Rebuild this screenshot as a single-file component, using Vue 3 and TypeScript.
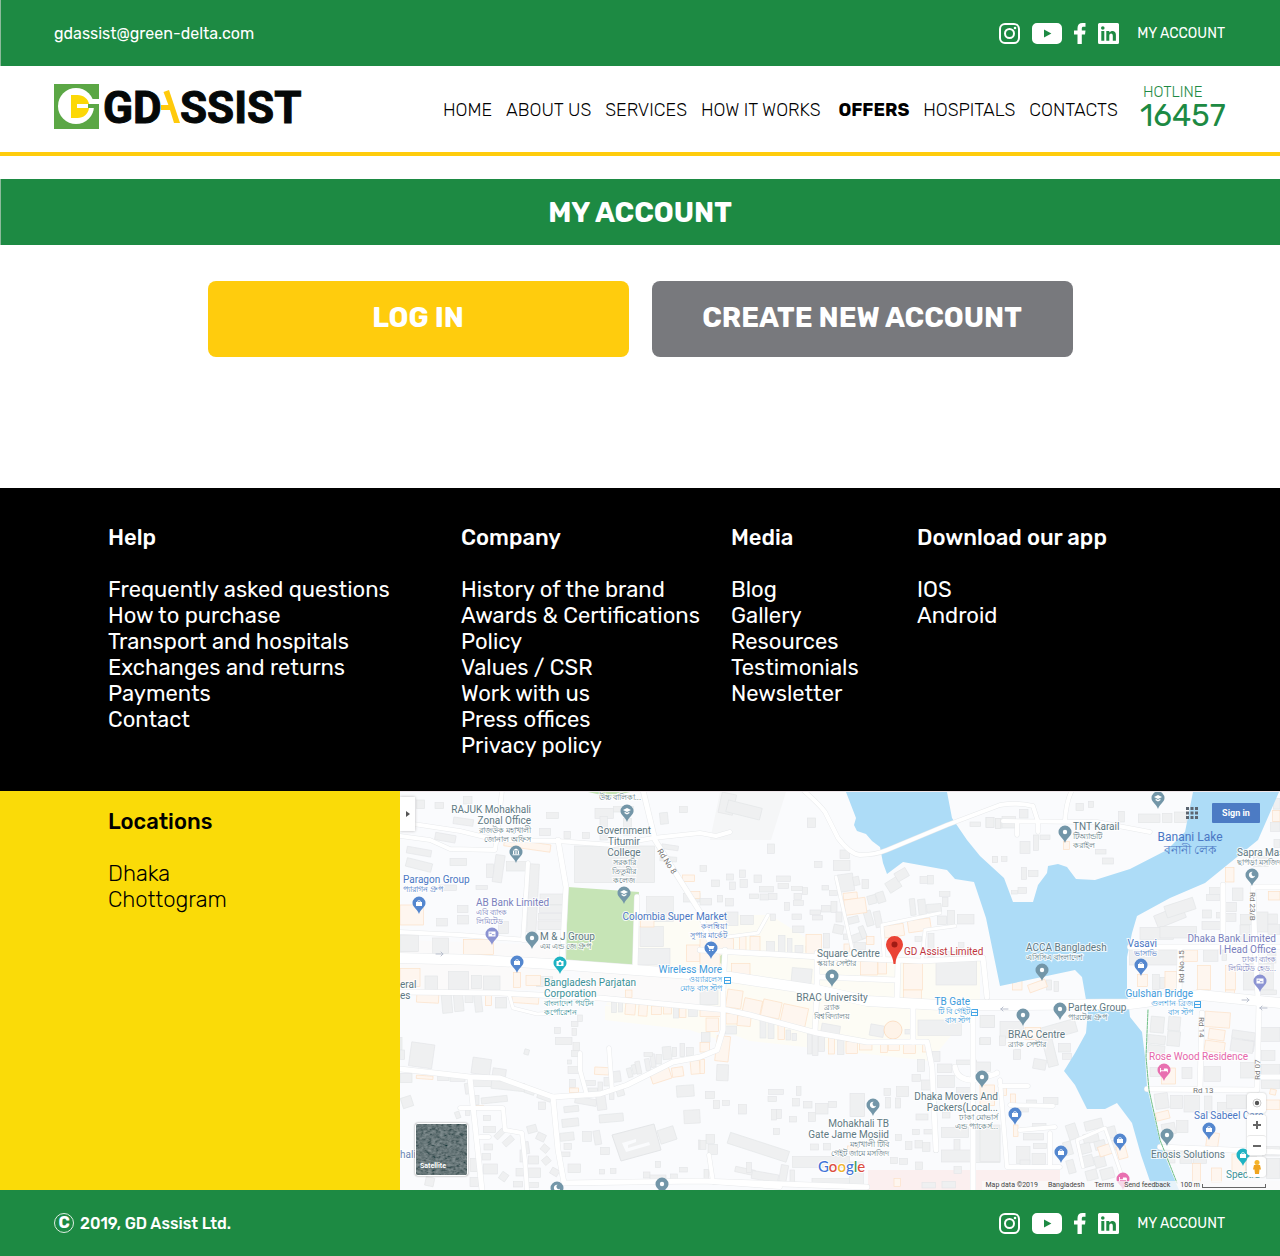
<script setup lang="ts">
interface Social { name: string; width: number; path: string }
interface Label { x: number; y: number; anchor: 'start' | 'middle' | 'end'; tone: string; en: string[]; bn: string[]; big?: boolean }
interface Pin { x: number; y: number; tone: string; icon: string }
interface Tile { x: number; y: number; plain: number[][]; shops: number[][] }

const socials: Social[] = [
  {
    name: 'Instagram',
    width: 21,
    path: 'M6 0h9a6 6 0 0 1 6 6v9a6 6 0 0 1-6 6H6a6 6 0 0 1-6-6V6a6 6 0 0 1 6-6zM6 2a4 4 0 0 0-4 4v9a4 4 0 0 0 4 4h9a4 4 0 0 0 4-4V6a4 4 0 0 0-4-4zM10.5 5a5.5 5.5 0 1 1 0 11a5.5 5.5 0 0 1 0-11zM10.5 7a3.5 3.5 0 1 0 0 7a3.5 3.5 0 0 0 0-7zM16 3.7a1.3 1.3 0 1 1 0 2.6a1.3 1.3 0 0 1 0-2.6z',
  },
  {
    name: 'YouTube',
    width: 30,
    path: 'M5 0h20a5 5 0 0 1 5 5v11a5 5 0 0 1-5 5H5a5 5 0 0 1-5-5V5a5 5 0 0 1 5-5zM12 6.4v8l7.4-4z',
  },
  {
    name: 'Facebook',
    width: 12,
    path: 'M3.5 21v-9.5H0v-4h3.5V5.2C3.5 1.9 5.3 0 8.5 0h3v3.8H9.5C8.3 3.8 7.8 4.3 7.8 5.4v2.1h3.7l-.5 4H7.8V21z',
  },
  {
    name: 'LinkedIn',
    width: 21,
    path: 'M1.5 0h18A1.5 1.5 0 0 1 21 1.5v18a1.5 1.5 0 0 1-1.5 1.5h-18A1.5 1.5 0 0 1 0 19.5v-18A1.5 1.5 0 0 1 1.5 0zM3.300 8v9.800h3V8zM4.800 3.200a1.800 1.800 0 1 0 0 3.600a1.800 1.800 0 0 0 0-3.600zM8.300 8v9.800h3v-5c0-3 3.500-3.200 3.500 0v5h3.100v-6c0-4.700-4.800-4.600-6.600-2.200V8z',
  },
]

const nav = ['HOME', 'ABOUT US', 'SERVICES', 'HOW IT WORKS', 'OFFERS', 'HOSPITALS', 'CONTACTS']
const current = 'OFFERS'

const columns = [
  { title: 'Help', links: ['Frequently asked questions', 'How to purchase', 'Transport and hospitals', 'Exchanges and returns', 'Payments', 'Contact'] },
  { title: 'Company', links: ['History of the brand', 'Awards & Certifications', 'Policy', 'Values / CSR', 'Work with us', 'Press offices', 'Privacy policy'] },
  { title: 'Media', links: ['Blog', 'Gallery', 'Resources', 'Testimonials', 'Newsletter'] },
  { title: 'Download our app', links: ['IOS', 'Android'] },
]

const slate = '#5f7983'
const blue = '#4a77c4'
const sky = '#3d9bdc'
const violet = '#7a80bd'
const teal = '#3c9299'

const labels: Label[] = [
  { x: 131, y: 23, anchor: 'end', tone: slate, en: ['RAJUK Mohakhali', 'Zonal Office'], bn: ['রাজউক মহাখালী', 'জোনাল অফিস'] },
  { x: 241, y: 10, anchor: 'end', tone: slate, en: [], bn: ['উচ্চ বালিকা...'] },
  { x: 224, y: 44, anchor: 'middle', tone: slate, en: ['Government', 'Titumir', 'College'], bn: ['সরকারি', 'তিতুমীর', 'কলেজ'] },
  { x: 3, y: 93, anchor: 'start', tone: blue, en: ['Paragon Group'], bn: ['প্যারাগন গ্রুপ'] },
  { x: 76, y: 116, anchor: 'start', tone: violet, en: ['AB Bank Limited'], bn: ['এবি ব্যাংক', 'লিমিটেড'] },
  { x: 140, y: 150, anchor: 'start', tone: slate, en: ['M & J Group'], bn: ['এম এন্ড জে গ্রুপ'] },
  { x: 144, y: 196, anchor: 'start', tone: teal, en: ['Bangladesh Parjatan', 'Corporation'], bn: ['বাংলাদেশ পর্যটন', 'কর্পোরেশন'] },
  { x: 327, y: 130, anchor: 'end', tone: blue, en: ['Colombia Super Market'], bn: ['কলম্বিয়া', 'সুপার মার্কেট'] },
  { x: 322, y: 183, anchor: 'end', tone: sky, en: ['Wireless More'], bn: ['ওয়্যারলেস', 'মোড় বাস স্টপ'] },
  { x: 0, y: 198, anchor: 'start', tone: slate, en: ['eral', 'es'], bn: [] },
  { x: 417, y: 167, anchor: 'start', tone: slate, en: ['Square Centre'], bn: ['স্কয়ার সেন্টার'] },
  { x: 504, y: 165, anchor: 'start', tone: '#c0353d', en: ['GD Assist Limited'], bn: [] },
  { x: 432, y: 211, anchor: 'middle', tone: slate, en: ['BRAC University'], bn: ['ব্র্যাক', 'বিশ্ববিদ্যালয়'] },
  { x: 570, y: 215, anchor: 'end', tone: sky, en: ['TB Gate'], bn: ['টি বি গেইট', 'বাস স্টপ'] },
  { x: 673, y: 40, anchor: 'start', tone: slate, en: ['TNT Karail'], bn: ['টিঅ্যান্ডটি', 'করাইল'] },
  { x: 790, y: 51, anchor: 'middle', tone: blue, en: ['Banani Lake'], bn: ['বনানী লেক'], big: true },
  { x: 837, y: 66, anchor: 'start', tone: slate, en: ['Sapra Mas'], bn: ['ছাপড়া মসজিদ'] },
  { x: 626, y: 161, anchor: 'start', tone: slate, en: ['ACCA Bangladesh'], bn: ['এসিসিএ বাংলাদেশ'] },
  { x: 757, y: 157, anchor: 'end', tone: blue, en: ['Vasavi'], bn: ['ভাসাভি'] },
  { x: 876, y: 152, anchor: 'end', tone: violet, en: ['Dhaka Bank Limited', '| Head Office'], bn: ['ঢাকা ব্যাংক', 'লিমিটেড হেড...'] },
  { x: 793, y: 207, anchor: 'end', tone: sky, en: ['Gulshan Bridge'], bn: ['গুলশান ব্রিজ', 'বাস স্টপ'] },
  { x: 668, y: 221, anchor: 'start', tone: slate, en: ['Partex Group'], bn: ['পারটেক্স গ্রুপ'] },
  { x: 608, y: 248, anchor: 'start', tone: slate, en: ['BRAC Centre'], bn: ['ব্র্যাক সেন্টার'] },
  { x: 749, y: 270, anchor: 'start', tone: '#e667ab', en: ['Rose Wood Residence'], bn: [] },
  { x: 598, y: 310, anchor: 'end', tone: slate, en: ['Dhaka Movers And', 'Packers(Local...'], bn: ['ঢাকা মোভার্স', 'এন্ড প্যাকের্স...'] },
  { x: 489, y: 337, anchor: 'end', tone: slate, en: ['Mohakhali TB', 'Gate Jame Mosjid'], bn: ['মহাখালী টিবি', 'গেইট জামে মসজিদ'] },
  { x: 794, y: 329, anchor: 'start', tone: blue, en: ['Sal Sabeel Care'], bn: [] },
  { x: 751, y: 368, anchor: 'start', tone: slate, en: ['Enosis Solutions'], bn: [] },
  { x: 826, y: 388, anchor: 'start', tone: teal, en: ['Spectra'], bn: [] },
  { x: 0, y: 368, anchor: 'start', tone: '#6c86b3', en: ['hali'], bn: [] },
]

const roadNames = [
  { x: 257, y: 61, turn: 57, text: 'Rd No 8' },
  { x: 850, y: 102, turn: 90, text: 'Rd 23/B' },
  { x: 784, y: 193, turn: -90, text: 'Rd No 15' },
  { x: 799, y: 227, turn: 90, text: 'Rd 14' },
  { x: 860, y: 290, turn: -90, text: 'Rd 07' },
  { x: 793, y: 303, turn: 0, text: 'Rd 13' },
]

const pinSlate = '#7396a8'
const pinBlue = '#5487cf'
const pinTeal = '#1eb3c3'
const pinPink = '#e870b0'
const pinViolet = '#8b93d2'

const pins: Pin[] = [
  { x: 116, y: 62, tone: pinSlate, icon: 'museum' },
  { x: 227, y: 21, tone: pinSlate, icon: 'school' },
  { x: 224, y: 103, tone: pinSlate, icon: 'school' },
  { x: 19, y: 113, tone: pinBlue, icon: 'bag' },
  { x: 92, y: 144, tone: pinViolet, icon: 'card' },
  { x: 132, y: 148, tone: pinSlate, icon: 'dot' },
  { x: 117, y: 172, tone: pinBlue, icon: 'bag' },
  { x: 160, y: 173, tone: pinTeal, icon: 'camera' },
  { x: 311, y: 158, tone: pinBlue, icon: 'cart' },
  { x: 432, y: 186, tone: pinSlate, icon: 'dot' },
  { x: 665, y: 42, tone: pinSlate, icon: 'dot' },
  { x: 758, y: 8, tone: pinSlate, icon: 'school' },
  { x: 852, y: 85, tone: pinSlate, icon: 'moon' },
  { x: 642, y: 180, tone: pinSlate, icon: 'dot' },
  { x: 741, y: 175, tone: pinBlue, icon: 'bag' },
  { x: 860, y: 191, tone: pinViolet, icon: 'card' },
  { x: 157, y: 398, tone: pinSlate, icon: 'moon' },
  { x: 262, y: 394, tone: pinSlate, icon: 'dot' },
  { x: 473, y: 315, tone: pinSlate, icon: 'moon' },
  { x: 582, y: 287, tone: pinSlate, icon: 'dot' },
  { x: 623, y: 225, tone: pinSlate, icon: 'dot' },
  { x: 660, y: 219, tone: pinSlate, icon: 'dot' },
  { x: 764, y: 280, tone: pinPink, icon: 'bed' },
  { x: 615, y: 324, tone: pinBlue, icon: 'bag' },
  { x: 661, y: 362, tone: pinBlue, icon: 'bag' },
  { x: 720, y: 350, tone: pinBlue, icon: 'bag' },
  { x: 809, y: 339, tone: pinBlue, icon: 'bag' },
  { x: 767, y: 345, tone: pinSlate, icon: 'dot' },
  { x: 843, y: 365, tone: pinTeal, icon: 'bag' },
  { x: 723, y: 389, tone: pinPink, icon: 'bed' },
]

const glyphs: Record<string, string> = {
  museum: 'M-3.500-1.500L0-3.500L3.500-1.500zM-3-1h1.200v3h-1.200zM-.6-1h1.200v3h-1.200zM1.800-1h1.200v3h-1.200zM-3.500 2.200h7v1h-7z',
  school: 'M-4-1L0-3L4-1L0 1zM-2.400.8L0 2L2.400.8v1.400L0 3.400L-2.400 2.200z',
  bag: 'M-3-1h1.200a1.800 1.800 0 0 1 3.600 0H3v4h-6zM-1-1h2a1 1 0 0 0-2 0z',
  card: 'M-3.500-2.500h7v5h-7zM-2.500-1.200v1h2v-1zM0 .3v1h2.500v-1z',
  camera: 'M-3.500-2h2l.8-1h1.400l.8 1h2v5h-7zM0-1a1.500 1.500 0 1 0 0 3a1.500 1.500 0 0 0 0-3z',
  cart: 'M-4-3h1.600l.4 1h5.500l-1.200 3h-4zM-2 1.700h1.400v1.400h-1.400zM1 1.700h1.400v1.400h-1.400z',
  bed: 'M-4-2h.9v2.200h3v-1.700h2.600a1.300 1.300 0 0 1 1.400 1.300v2.500h-.8v-1h-6.200v1h-.9z',
  moon: 'M1.500 2.800a3.200 3.200 0 1 1-.8-6a2.300 2.300 0 1 0 2.300 4a3 3 0 0 1-1.500 2z',
  dot: 'M-2.200 0a2.200 2.200 0 1 0 4.400 0a2.200 2.200 0 1 0-4.400 0z',
}

const roads: { w: number; d: string }[] = [
  { w: 4, d: 'M0 32L60 41L97 50L157 51L213 55L253 48L300 43L316 46L330 42' },
  { w: 4, d: 'M0 46L30 50L50 59L95 60L99 30L102 0' },
  { w: 5, d: 'M158 50L166 97L162 173' },
  { w: 4, d: 'M128 73L123 150' },
  { w: 4, d: 'M0 142L60 145L127 150' },
  { w: 5, d: 'M243 0L255 50L300 122L309 150' },
  { w: 5, d: 'M237 107L235 178' },
  { w: 4, d: 'M403 0Q420 15 425 22L438 48Q450 64 460 65Q475 65 487 60L547 35L600 15Q618 12 633 16L638 32L638 42' },
  { w: 4, d: 'M603 31L697 32L750 42M617 32V45M665 31Q666 12 672 0' },
  { w: 3, d: 'M436 87L452 158M484 167L482 135L540 123M522 170L525 140L555 136M368 125L358 143L327 147' },
  { w: 5, d: 'M300 160L420 167L520 171L583 168L587 207M325 160L323 200' },
  { w: 5, d: 'M417 163V200L415 242M498 170L497 213M420 187L497 190' },
  { w: 5, d: 'M0 202L100 203L200 208L327 220L350 225L417 243L467 252H527L532 277L536 360' },
  { w: 3, d: 'M109 204L113 218L137 224L175 222' },
  { w: 5, d: 'M323 200V240L317 260L300 267L273 272L227 295L200 304L153 307L100 288L70 287L0 279' },
  { w: 5, d: 'M70 288L82 400M153 307L158 360L164 393L300 391L467 397' },
  { w: 4, d: 'M60 318H103L105 340L122 343L125 370L127 400M80 347H89' },
  { w: 4, d: 'M180 263V280L186 302M209 258L212 300' },
  { w: 4, d: 'M309 365L313 392L380 397' },
  { w: 5, d: 'M513 215V252M573 213V400M555 277Q557 290 573 290Q595 285 597 283' },
  { w: 4, d: 'M600 290L607 377H660M600 296H628M610 315L653 316M650 343V377M620 340L655 337' },
  { w: 3, d: 'M683 377L677 350L705 338L727 400' },
  { w: 5, d: 'M747 299L857 300L859 213M802 223L800 299M760 357L880 362M857 287H880' },
  { w: 5, d: 'M730 157H880M823 95V157M853 97L855 157L858 208M853 97H880M780 157L779 210' },
  { w: 10, d: 'M0 168L80 170L167 175L235 180L330 187L417 200L467 211L540 215H620L730 214L800 205L880 213' },
]

const tiles: Tile[] = [
  {
    x: 0, y: 0,
    plain: [[50, 30, 24, 26], [105, 38, 26, 18], [190, 20, 26, 22], [160, 85, 60, 20, 8], [105, 132, 62, 22, 10], [20, 175, 74, 20, 10], [18, 212, 78, 26, 14], [150, 205, 50, 22], [117, 285, 52, 16], [228, 286, 34, 12], [260, 222, 20, 40], [282, 195, 28, 82, 8], [320, 215, 60, 28], [385, 222, 28, 205, 3], [440, 68, 35, 18], [418, 115, 34, 22], [492, 124, 20, 22], [548, 128, 20, 18], [585, 55, 55, 30], [640, 50, 60, 16], [600, 80, 22, 70], [670, 85, 24, 50], [780, 68, 24, 34, -6], [838, 50, 24, 18], [785, 165, 50, 14, 8], [780, 200, 50, 14, 5], [172, 346, 32, 22], [172, 376, 34, 26], [110, 386, 32, 22], [0, 435, 55, 50], [98, 444, 48, 46], [295, 395, 30, 36], [420, 312, 70, 32], [418, 345, 70, 22], [416, 370, 70, 20], [414, 393, 70, 26], [740, 320, 80, 75], [720, 410, 70, 60], [700, 475, 110, 50], [145, 545, 60, 55], [214, 556, 30, 40], [250, 558, 50, 42], [75, 558, 38, 42], [410, 560, 48, 30], [524, 168, 240, 110], [850, 310, 50, 26]],
    shops: [[312, 155, 140, 22, 8], [0, 345, 70, 60], [190, 448, 90, 45], [848, 255, 36, 20], [870, 305, 30, 20], [340, 548, 22, 44], [378, 556, 44, 30], [0, 535, 60, 55], [722, 375, 40, 36], [860, 465, 40, 50]],
  },
  {
    x: 300, y: 0,
    plain: [[60, 10, 44, 62, 12], [80, 42, 104, 36, 14], [322, 84, 25, 28], [202, 162, 22, 28], [0, 227, 20, 18], [344, 214, 22, 18], [420, 180, 28, 26], [400, 212, 50, 30], [415, 252, 46, 52, -8], [460, 260, 18, 26, -12], [486, 268, 20, 28], [560, 268, 40, 34, -32], [586, 240, 38, 28, -30], [660, 260, 22, 20], [682, 256, 18, 26], [718, 305, 32, 14], [728, 322, 16, 28], [230, 258, 42, 16], [234, 281, 32, 14], [275, 290, 32, 12], [307, 293, 16, 20], [178, 290, 42, 16], [148, 312, 28, 14], [180, 312, 25, 18], [205, 310, 26, 18], [118, 240, 18, 22], [80, 252, 20, 18], [88, 276, 18, 22], [120, 268, 22, 24], [162, 255, 22, 22], [35, 270, 24, 20], [0, 325, 35, 20], [52, 316, 16, 20], [76, 326, 24, 22], [254, 337, 14, 24], [282, 310, 22, 18], [280, 332, 30, 14], [276, 372, 28, 16], [278, 408, 34, 20], [366, 286, 20, 14], [388, 302, 24, 14], [393, 335, 18, 32], [364, 346, 28, 20], [330, 360, 32, 14], [338, 376, 30, 14], [408, 366, 18, 30], [400, 405, 30, 26, 12], [430, 432, 22, 16], [503, 316, 26, 26, -15], [530, 306, 24, 32, -18], [495, 362, 22, 46, -16], [524, 364, 20, 48, -12], [444, 380, 32, 20, -14], [450, 430, 50, 22, -20], [480, 408, 16, 38, -20], [462, 458, 34, 22], [630, 326, 16, 50, -6], [655, 328, 22, 46, -6], [680, 342, 44, 24, -4], [712, 378, 28, 26], [742, 362, 22, 46], [772, 374, 50, 28], [684, 430, 18, 76], [645, 440, 20, 14], [708, 510, 122, 75], [776, 458, 16, 14], [735, 484, 80, 18], [80, 366, 34, 40], [122, 376, 38, 28], [212, 372, 14, 20], [235, 436, 20, 55], [262, 446, 14, 44], [200, 455, 24, 32], [285, 466, 24, 22], [318, 468, 40, 18], [370, 430, 18, 44], [275, 535, 60, 44, 5], [810, 96, 32, 14], [858, 82, 24, 30], [886, 85, 18, 30], [878, 200, 14, 18]],
    shops: [[430, 308, 42, 20, -6], [434, 326, 64, 46, -8], [500, 440, 22, 24], [432, 462, 16, 24], [552, 404, 60, 36, -8], [624, 388, 68, 36, -8], [318, 433, 46, 62], [118, 440, 20, 42], [150, 440, 30, 46], [0, 445, 100, 40], [94, 520, 56, 36], [0, 485, 60, 60], [534, 514, 26, 38], [482, 515, 50, 40], [610, 520, 58, 80]],
  },
  {
    x: 580, y: 0,
    plain: [[288, 40, 22, 22], [325, 34, 16, 18], [415, 64, 18, 32], [475, 72, 65, 26], [548, 70, 28, 28], [584, 66, 36, 32], [18, 82, 24, 30], [46, 86, 16, 30], [66, 80, 40, 34], [118, 58, 26, 26], [120, 154, 30, 36], [160, 135, 16, 46], [180, 135, 30, 14], [346, 178, 32, 14], [368, 204, 32, 18], [38, 200, 14, 18], [65, 200, 16, 14], [124, 232, 16, 36], [146, 242, 28, 18], [94, 302, 18, 10], [114, 292, 26, 18], [880, 25, 20, 32], [872, 98, 28, 26], [882, 148, 18, 24], [688, 293, 38, 20], [680, 313, 40, 18], [757, 294, 32, 38], [734, 337, 36, 28], [734, 370, 34, 24], [668, 360, 26, 24], [666, 394, 56, 24], [710, 368, 12, 16], [782, 374, 32, 30], [780, 405, 30, 50], [830, 366, 34, 60], [864, 372, 28, 30], [864, 404, 36, 30], [525, 360, 90, 40, -22], [555, 335, 90, 36, -18], [480, 412, 100, 36], [540, 410, 110, 34], [448, 480, 150, 45], [670, 480, 44, 34], [726, 482, 14, 30], [518, 553, 20, 46], [540, 562, 16, 34], [790, 520, 90, 80], [862, 485, 26, 34], [222, 575, 14, 30], [200, 570, 15, 30], [880, 60, 20, 34], [820, 198, 46, 32]],
    shops: [[250, 155, 18, 24], [736, 232, 26, 44], [865, 304, 35, 26], [472, 554, 30, 36], [555, 545, 34, 55], [610, 480, 42, 34], [652, 526, 40, 74], [736, 526, 30, 74], [878, 62, 22, 32], [98, 572, 28, 28], [145, 576, 55, 24, -20]],
  },
  {
    x: 0, y: 200,
    plain: [[126, 14, 30, 55, -5], [162, 10, 28, 54, -5], [195, 12, 24, 26], [224, 16, 22, 50, -6], [286, 22, 34, 32], [0, 142, 6, 38], [0, 180, 14, 28], [30, 160, 70, 72, 8], [216, 205, 56, 48, 8], [278, 236, 40, 22, 8], [0, 250, 36, 28], [113, 258, 34, 14], [150, 262, 45, 12], [216, 268, 58, 22], [274, 276, 100, 24, 6], [374, 296, 30, 16, 18], [412, 312, 42, 18, 20], [415, 336, 22, 22], [5, 320, 32, 32, -18], [195, 280, 14, 32, -8], [225, 316, 12, 28], [244, 320, 78, 18, -6], [250, 376, 22, 16], [166, 365, 14, 20, -20], [196, 360, 14, 16], [250, 410, 36, 18], [282, 424, 34, 16, -45], [308, 444, 34, 18, -42], [252, 462, 26, 18], [246, 490, 26, 20], [250, 522, 42, 30], [300, 548, 22, 24, 35], [212, 505, 22, 40], [210, 562, 26, 28], [382, 406, 28, 22, -15], [410, 430, 26, 22, 25], [375, 455, 12, 36, -8], [360, 480, 12, 36], [386, 498, 30, 24], [424, 466, 22, 20, 40], [428, 502, 22, 20, -40], [348, 536, 26, 22], [384, 534, 38, 28], [340, 575, 28, 16], [384, 578, 32, 14], [452, 536, 24, 20, 30], [76, 562, 26, 26, 12], [463, 112, 18, 18], [466, 142, 50, 22], [516, 116, 14, 20], [519, 158, 20, 24], [515, 182, 24, 18], [533, 75, 14, 20], [514, 94, 20, 16], [502, 210, 12, 12], [504, 230, 38, 20], [508, 268, 18, 24], [373, 178, 14, 16, 15], [525, 324, 65, 20, 10], [590, 316, 28, 44, -8], [492, 348, 44, 18, -6], [486, 386, 50, 24, -6], [480, 428, 42, 24, -6], [492, 460, 22, 18], [480, 486, 30, 14], [504, 522, 38, 26], [548, 424, 26, 30], [582, 422, 20, 42, -10], [598, 372, 72, 24, -5], [602, 472, 26, 22], [598, 538, 16, 14], [632, 536, 16, 14], [552, 272, 34, 14], [565, 294, 28, 12], [594, 276, 14, 28], [612, 262, 16, 26], [636, 244, 26, 32, -8], [628, 308, 14, 20], [650, 294, 22, 24, -15], [682, 234, 14, 28, -15], [697, 224, 12, 28, -15], [708, 214, 14, 38, -12], [736, 206, 14, 36, -10], [752, 192, 14, 40, -8], [732, 188, 26, 12], [768, 194, 16, 28], [788, 170, 26, 38, -5], [818, 172, 12, 28], [840, 160, 14, 40], [860, 172, 20, 26], [830, 286, 52, 34, -4], [852, 360, 48, 40, -3], [776, 414, 50, 42, -18], [766, 514, 16, 18], [838, 532, 24, 14], [730, 546, 20, 18], [750, 555, 48, 16], [812, 552, 20, 20], [635, 38, 14, 30], [656, 38, 12, 28], [820, 46, 16, 38], [866, 54, 26, 26], [895, 450, 5, 28]],
    shops: [[50, 8, 66, 30, 3], [256, 14, 18, 32], [336, 20, 80, 20, 4], [49, 257, 50, 10, 4], [230, 346, 20, 12], [508, 294, 28, 14], [584, 232, 42, 22, 3], [752, 238, 60, 36, -18], [816, 232, 34, 28, -8], [872, 212, 28, 40, -5], [676, 40, 30, 34, 5], [716, 42, 26, 36, 4], [754, 48, 30, 26], [790, 50, 24, 22], [838, 52, 20, 30], [676, 0, 20, 22]],
  },
  {
    x: 300, y: 200,
    plain: [[50, 224, 35, 48, 2], [16, 304, 28, 22], [40, 332, 18, 24], [68, 332, 20, 14], [115, 344, 24, 28], [206, 298, 44, 15], [204, 319, 25, 16], [289, 290, 14, 26], [278, 326, 20, 22], [310, 334, 26, 20], [346, 340, 38, 32], [386, 334, 24, 18], [215, 358, 14, 32], [230, 358, 14, 28], [268, 380, 22, 16], [325, 368, 22, 26], [220, 416, 18, 18], [450, 310, 44, 70], [552, 296, 20, 20], [556, 322, 16, 32], [590, 290, 36, 30], [586, 324, 16, 30], [332, 462, 24, 18], [370, 460, 22, 20], [586, 434, 18, 18], [616, 455, 20, 24], [645, 452, 22, 22], [638, 418, 20, 16], [672, 418, 34, 14], [648, 372, 36, 18], [572, 503, 20, 18], [598, 505, 25, 18], [646, 516, 22, 22], [668, 458, 22, 26], [82, 455, 186, 34, 18], [278, 500, 170, 32], [105, 535, 60, 16, 12], [140, 518, 14, 30], [155, 548, 80, 24, 10], [240, 525, 22, 50, 10], [336, 566, 112, 16], [18, 434, 26, 26], [24, 463, 28, 30], [0, 452, 18, 26], [12, 538, 14, 30], [270, 540, 14, 44], [448, 516, 42, 68], [636, 254, 26, 20], [665, 270, 30, 30], [652, 208, 22, 36], [712, 222, 44, 26], [713, 256, 50, 36], [696, 184, 24, 30], [770, 210, 60, 14], [770, 292, 50, 26], [838, 145, 34, 18], [848, 76, 36, 36], [828, 216, 44, 28], [654, 90, 130, 46], [180, 88, 18, 56], [204, 90, 18, 56], [258, 120, 14, 30], [276, 130, 14, 22], [322, 132, 14, 60], [338, 134, 16, 62], [356, 140, 18, 44], [412, 150, 20, 44], [76, 108, 34, 24], [364, 104, 56, 26, 10], [510, 105, 42, 34, 10], [615, 118, 20, 14], [4, 128, 26, 28], [0, 0, 54, 44], [762, 448, 18, 40], [724, 412, 82, 30], [724, 480, 98, 36], [728, 366, 22, 18], [826, 416, 74, 102], [762, 530, 22, 20], [666, 578, 40, 16], [726, 574, 40, 20]],
    shops: [[80, 0, 46, 54, 8], [130, 28, 54, 44, 12], [186, 32, 56, 50, 12], [245, 48, 76, 56, 12], [0, 55, 64, 24], [18, 84, 38, 40], [78, 70, 34, 32], [112, 78, 40, 30, 5], [234, 104, 20, 44], [385, 140, 18, 52], [438, 154, 34, 36], [478, 158, 38, 22], [542, 160, 20, 28], [566, 162, 32, 20], [610, 164, 36, 26], [668, 164, 14, 22], [48, 138, 40, 76, 6], [0, 158, 28, 28], [0, 208, 14, 42], [610, 0, 54, 34], [842, 286, 42, 60], [582, 566, 20, 24], [442, 468, 30, 14]],
  },
  {
    x: 580, y: 200,
    plain: [[0, 76, 44, 36], [60, 94, 70, 50], [0, 142, 32, 22], [58, 138, 18, 28], [180, 100, 110, 40, -16], [195, 140, 30, 90, -14], [235, 160, 36, 26], [248, 190, 26, 18], [100, 178, 22, 30], [160, 208, 38, 30, 10], [512, 80, 40, 48, 5], [504, 136, 52, 26, 6], [504, 166, 50, 24, 6], [565, 80, 36, 42, 5], [562, 124, 38, 44, 5], [510, 232, 34, 28], [606, 232, 30, 34], [672, 230, 50, 44], [785, 152, 38, 30, 8], [782, 218, 42, 46], [756, 124, 70, 24, 8], [752, 150, 68, 36, 8], [840, 112, 60, 42], [845, 182, 40, 30], [845, 224, 55, 30], [845, 270, 55, 26], [525, 310, 40, 46, -8], [572, 316, 36, 40], [612, 316, 46, 50], [674, 318, 22, 50], [712, 338, 44, 28], [740, 315, 60, 40], [546, 400, 40, 34, -10], [590, 392, 34, 36], [262, 402, 30, 46, -18], [314, 390, 54, 28, -14], [310, 430, 46, 28, -12], [380, 410, 28, 34, -15], [390, 450, 30, 30, -15], [302, 460, 30, 30, -15], [344, 452, 32, 26, -15], [308, 496, 32, 34, -15], [344, 498, 32, 34, -15], [362, 535, 40, 32, -15], [318, 540, 34, 30, -15], [252, 455, 24, 40, -15], [262, 510, 22, 40, -15], [190, 322, 44, 22], [140, 330, 30, 16], [115, 350, 30, 16], [158, 400, 40, 16], [130, 430, 60, 20], [160, 460, 40, 16], [110, 470, 40, 50], [156, 490, 40, 34], [0, 405, 60, 110], [555, 475, 30, 44], [600, 484, 36, 36], [640, 490, 40, 30], [780, 500, 50, 40], [848, 470, 50, 28], [860, 505, 40, 60], [570, 6, 30, 14], [840, 0, 50, 14], [120, 510, 30, 20]],
    shops: [[674, 66, 76, 46, 4], [686, 118, 48, 32, 8], [674, 154, 60, 32, 8], [545, 234, 42, 48], [135, 112, 46, 36], [528, 365, 40, 24, -14], [92, 312, 14, 28], [100, 405, 14, 34], [62, 290, 18, 26], [0, 285, 44, 62], [356, 466, 38, 30, -18], [412, 468, 28, 38, -15], [638, 520, 24, 60], [695, 534, 30, 44], [756, 492, 40, 60], [870, 298, 18, 16, 12], [855, 330, 45, 28], [680, 428, 36, 42, 8], [650, 0, 36, 14], [736, 0, 28, 20]],
  },
]

function spin(b: number[]): string | undefined {
  return b.length > 4 ? `rotate(${b[4]} ${b[0] + b[2] / 2} ${b[1] + b[3] / 2})` : undefined
}
function lineY(l: Label, i: number): number {
  return l.y + i * 11
}
function subY(l: Label, i: number): number {
  return l.big ? l.y + 13 : l.y + l.en.length * 11 + i * 9 - (l.en.length ? 2 : 0)
}
</script>

<template>
  <div class="page">
    <div class="bar top">
      <a class="mail" href="mailto:gdassist@green-delta.com">gdassist@green-delta.com</a>
      <nav class="social" aria-label="Social and account">
        <a v-for="s in socials" :key="s.name" href="#" :aria-label="s.name">
          <svg :width="s.width" height="21" :viewBox="`0 0 ${s.width} 21`"><path :d="s.path" fill="#fff" fill-rule="evenodd" /></svg>
        </a>
        <a class="account" href="#">MY ACCOUNT</a>
      </nav>
    </div>

    <header class="header">
      <a class="logo" href="#" aria-label="GD Assist">
        <svg width="248" height="46" viewBox="0 0 248 46">
          <rect width="45" height="45" fill="#5ba745" />
          <circle cx="22" cy="22" r="18" fill="#fff" />
          <path d="M34 15h12v5H34z" fill="#fff" />
          <path d="M34 20h11v4H34z" fill="#5ba745" />
          <path d="M17 11h6.500c6 0 11 4 11.500 9H23v4h12c-.6 6-5.500 10-11.500 10H17z" fill="#fcd806" />
          <text x="49" y="39" class="mark">GD</text>
          <path d="M109.500 8L115 6L126 39h-6L116 26h-9v-5h7.400z" fill="#ffca0b" />
          <text x="126" y="39" class="mark">SSIST</text>
        </svg>
      </a>
      <nav class="menu" aria-label="Main">
        <a v-for="n in nav" :key="n" href="#" :class="{ current: n === current }">{{ n }}</a>
      </nav>
      <div class="hotline"><span>HOTLINE</span><strong>16457</strong></div>
    </header>

    <main>
      <h1 class="banner">MY ACCOUNT</h1>
      <div class="actions">
        <button type="button" class="login">LOG IN</button>
        <button type="button" class="create">CREATE NEW ACCOUNT</button>
      </div>
    </main>

    <section class="links">
      <div v-for="c in columns" :key="c.title">
        <h2>{{ c.title }}</h2>
        <ul>
          <li v-for="l in c.links" :key="l"><a href="#">{{ l }}</a></li>
        </ul>
      </div>
    </section>

    <section class="places">
      <div class="locations">
        <h2>Locations</h2>
        <ul>
          <li><a href="#">Dhaka</a></li>
          <li><a href="#">Chottogram</a></li>
        </ul>
      </div>
      <div class="map">
        <svg class="canvas" viewBox="0 2 880 398" preserveAspectRatio="xMidYMid slice" role="img" aria-label="Map of Mohakhali, Dhaka">
          <rect y="2" width="880" height="398" fill="#fafbfd" />
          <path d="M20 2h66l-15 48H10z" transform="translate(300)" fill="#f5f6f7" />
          <path d="M240 125h130l60 38 150 8v40l-50 60-180-20-80-30-64-6zM205 216l95 4 20 30-30-10-85-10z" fill="#fdfcf5" />
          <path d="M0 150L160 155V200L0 200zM180 180l120 10v30l-120-10z" fill="#fbfafa" />
          <path d="M468 380h192v20H468z" fill="#fbefef" />
          <path d="M188 2h42l-20 5zM320 166l4-3v13l-4-3z" fill="#c6e4b6" />
          <g v-for="(t, ti) in tiles" :key="ti" :transform="`translate(${t.x} ${t.y}) scale(.3333)`">
            <rect v-for="(b, i) in t.plain" :key="'p' + i" :x="b[0]" :y="b[1]" :width="b[2]" :height="b[3]" :transform="spin(b)" fill="#eff0f1" stroke="#e4e6e8" stroke-width="2" />
            <rect v-for="(b, i) in t.shops" :key="'s' + i" :x="b[0]" :y="b[1]" :width="b[2]" :height="b[3]" :transform="spin(b)" fill="#fef6ef" stroke="#fce0c6" stroke-width="2" />
          </g>
          <path d="M212 345l42-11 7 26-40 11z" fill="#eff0f1" stroke="#e4e6e8" />
          <path d="M222 353l14-4v3l-8 3v3l21-6 1 3-24 7z" fill="#fafbfd" />
          <circle cx="493" cy="240" r="9" fill="#fef3e8" stroke="#fce0c6" />
          <path d="M168 97l71 5-5 73-68-4z" fill="#c6e4b6" />
          <path
            d="M446 2L456 28L454 35L457 41L466 44L472 51L480 57L483 73L487 84L503 72L547 80L555 89L574 92L586 128L600 196L675 180L682 187L688 221L686 243L675 263L664 281L675 295L687 319H705L717 313L732 333L741 365L753 400H779L761 357L747 297L745 267L742 242L730 227L727 200V167L732 143L737 126L770 108L805 93L858 50L879 2H793L785 42L767 60L730 79L695 90L676 89L667 77L658 74L648 76L647 83L638 95L633 112H613L604 88L580 66L567 50L552 28L547 2z"
            fill="#addcf7"
          />
          <g fill="none" stroke-linecap="round" stroke-linejoin="round">
            <path v-for="(r, i) in roads" :key="'c' + i" :d="r.d" stroke="#e8eaec" :stroke-width="r.w + 1" />
            <path v-for="(r, i) in roads" :key="'r' + i" :d="r.d" stroke="#fff" :stroke-width="r.w" />
            <path d="M748 220L746 267L749 300L760 350L777 393" stroke="#6fbf86" stroke-dasharray="3 1" />
            <path d="M36 164h7m-2-2l2 2-2 2M601 219h7m-7 0l2-2m-2 2l2 2M842 210h7m-2-2l2 2-2 2M860 218h7m-7 0l2-2m-2 2l2 2" stroke="#b9bfcd" />
          </g>
          <g class="road-names">
            <text v-for="r in roadNames" :key="r.text" :transform="`translate(${r.x} ${r.y}) rotate(${r.turn})`">{{ r.text }}</text>
          </g>
          <path fill="#41a5e6" fill-rule="evenodd" d="M324 187h7v7h-7zm1 1v2h5v-2zm0 3v2h5v-2zM571 219h7v7h-7zm1 1v2h5v-2zm0 3v2h5v-2zM794 211h7v7h-7zm1 1v2h5v-2zm0 3v2h5v-2z" />
          <g v-for="(p, i) in pins" :key="'pin' + i" :transform="`translate(${p.x} ${p.y})`">
            <path d="M0-6.500a6.500 6.500 0 0 1 6.500 6.500C6.500 4 2 5.500 0 11C-2 5.500-6.500 4-6.500 0A6.500 6.500 0 0 1 0-6.500z" :fill="p.tone" />
            <path :d="glyphs[p.icon]" fill="#fff" fill-rule="evenodd" />
          </g>
          <g v-for="(l, i) in labels" :key="'l' + i" :class="['label', { big: l.big }]" :fill="l.tone" :text-anchor="l.anchor">
            <text v-for="(t, k) in l.en" :key="t" :x="l.x" :y="lineY(l, k)">{{ t }}</text>
            <text v-for="(t, k) in l.bn" :key="t" :x="l.x" :y="subY(l, k)" class="bn">{{ t }}</text>
          </g>
          <path d="M494.500 146a8.500 8.500 0 0 1 8.500 8.500C503 161 496 163 495.500 174h-2C493 163 486 161 486 154.500A8.500 8.500 0 0 1 494.500 146z" fill="#ea4335" />
          <circle cx="494.500" cy="154.500" r="3" fill="#a11b14" />
          <text x="418" y="382" class="google">
            <tspan fill="#4274d8">G</tspan><tspan fill="#dc4e41">o</tspan><tspan fill="#f0b42c">o</tspan><tspan fill="#4274d8">g</tspan><tspan fill="#3c9a56">l</tspan><tspan fill="#dc4e41">e</tspan>
          </text>
        </svg>

        <button type="button" class="drawer" aria-label="Expand side panel"><svg width="4" height="6" viewBox="0 0 4 6"><path d="M0 0l4 3-4 3z" fill="#555" /></svg></button>
        <button type="button" class="satellite">
          <svg width="51" height="51" viewBox="0 0 51 51" aria-hidden="true">
            <filter id="terrain"><feTurbulence type="fractalNoise" baseFrequency=".25 .4" numOctaves="3" seed="4" /><feColorMatrix values=".6 .4 0 0 -.25  .6 .4 0 0 -.2  .6 .4 0 0 -.2  0 0 0 0 1" /></filter>
            <rect width="51" height="51" fill="#33474b" />
            <rect width="51" height="51" filter="url(#terrain)" opacity=".6" />
          </svg>
          <span>Satellite</span>
        </button>
        <div class="user">
          <button type="button" class="apps" aria-label="Apps">
            <svg width="12" height="12" viewBox="0 0 12 12"><path d="M0 0h3v3H0zM4.500 0h3v3h-3zM9 0h3v3H9zM0 4.500h3v3H0zM4.500 4.500h3v3h-3zM9 4.500h3v3H9zM0 9h3v3H0zM4.500 9h3v3h-3zM9 9h3v3H9z" fill="#5c6570" /></svg>
          </button>
          <button type="button" class="signin">Sign in</button>
        </div>
        <div class="controls">
          <button type="button" aria-label="Your location"><svg width="10" height="10" viewBox="0 0 10 10"><circle cx="5" cy="5" r="4" fill="none" stroke="#ccc" /><circle cx="5" cy="5" r="2.200" fill="#555" /></svg></button>
          <div class="zoom">
            <button type="button" aria-label="Zoom in"><svg width="8" height="8" viewBox="0 0 8 8"><path d="M3 0h2v3h3v2H5v3H3V5H0V3h3z" fill="#666" /></svg></button>
            <button type="button" aria-label="Zoom out"><svg width="8" height="8" viewBox="0 0 8 8"><path d="M0 3h8v2H0z" fill="#666" /></svg></button>
          </div>
          <button type="button" aria-label="Street View"><svg width="10" height="14" viewBox="0 0 10 14"><circle cx="5" cy="2.500" r="2.500" fill="#f5b52b" /><path d="M2 5h6l1 4.500H7.500L7 14H3l-.5-4.500H1z" fill="#f0a51e" /></svg></button>
        </div>
        <div class="credits">
          <span>Map data ©2019</span><span>Bangladesh</span><a href="#">Terms</a><a href="#">Send feedback</a><span class="scale">100 m<i></i></span>
        </div>
      </div>
    </section>

    <footer class="bar bottom">
      <p class="copy"><span class="c">C</span>2019, GD Assist Ltd.</p>
      <nav class="social" aria-label="Footer social and account">
        <a v-for="s in socials" :key="s.name" href="#" :aria-label="s.name">
          <svg :width="s.width" height="21" :viewBox="`0 0 ${s.width} 21`"><path :d="s.path" fill="#fff" fill-rule="evenodd" /></svg>
        </a>
        <a class="account" href="#">MY ACCOUNT</a>
      </nav>
    </footer>
  </div>
</template>

<style>
body {
  margin: 0;
  background: #fff;
}
</style>

<style scoped>
.page {
  font-family: Rubik, Roboto, "Noto Sans", sans-serif;
  color: #000;
}
a {
  color: inherit;
  text-decoration: none;
}
button {
  border: 0;
  padding: 0;
  font-family: inherit;
  cursor: pointer;
}
svg {
  display: block;
}
ul {
  list-style: none;
  margin: 0;
  padding: 0;
}
h1,
h2,
p {
  margin: 0;
}
.bar {
  display: flex;
  align-items: center;
  justify-content: space-between;
  height: 66px;
  box-sizing: border-box;
  padding: 0 55px 0 54px;
  background: #1d8a43;
  color: #fff;
}
.top,
.banner {
  box-shadow: inset 1px 0 #8cba9b;
}
.mail {
  font-size: 16px;
}
.social {
  display: flex;
  align-items: center;
  gap: 12px;
}
.account {
  margin-left: 6px;
  font-size: 14px;
}
.header {
  display: flex;
  align-items: center;
  height: 86px;
  padding: 0 55px 0 54px;
  border-bottom: 4px solid #ffcc0d;
}
.logo {
  margin-top: -5px;
}
.logo svg {
  overflow: visible;
}
.mark {
  font: 700 44px Roboto, sans-serif;
  fill: #050808;
  stroke: #050808;
  stroke-width: 1px;
}
.menu {
  display: flex;
  justify-content: space-between;
  width: 675px;
  margin: 2px 23px 0 auto;
  font-size: 18px;
  font-weight: 300;
  white-space: nowrap;
}
.current {
  padding-left: 4px;
  font-weight: 700;
}
.hotline {
  display: flex;
  flex-direction: column;
  width: 84px;
  margin-top: -2px;
  color: #1d8a43;
}
.hotline span {
  padding-left: 2px;
  font-size: 15px;
  line-height: 16px;
  font-weight: 300;
}
.hotline strong {
  margin-left: -1px;
  font-size: 31px;
  line-height: 32px;
  font-weight: 400;
}
.banner {
  margin-top: 23px;
  padding-top: 2px;
  background: #1d8a43;
  color: #fff;
  font-size: 28px;
  line-height: 64px;
  font-weight: 700;
  text-align: center;
}
.actions {
  display: flex;
  gap: 23px;
  max-width: 865px;
  margin: 36px auto 131px;
}
.actions button {
  flex: 1;
  height: 76px;
  padding-bottom: 4px;
  border-radius: 8px;
  color: #fff;
  font-size: 28px;
  font-weight: 700;
}
.login {
  background: #ffcc0d;
}
.create {
  background: #78797d;
}
.links {
  display: grid;
  grid-template-columns: 353fr 270fr 186fr 363fr;
  padding: 37px 0 32px 108px;
  background: #000;
  color: #fff;
  font-size: 22px;
  line-height: 26px;
}
.links h2,
.locations h2 {
  margin-bottom: 26px;
  font-size: 22px;
  line-height: 26px;
  font-weight: 500;
}
.places {
  display: flex;
}
.locations {
  flex: 0 0 400px;
  box-sizing: border-box;
  padding: 18px 0 0 108px;
  background: #fadb08;
  font-size: 22px;
  line-height: 26px;
  font-weight: 300;
}
.map {
  position: relative;
  flex: 1;
  min-width: 0;
  height: 398px;
  border-top: 1px solid #efe6ea;
  overflow: hidden;
}
.canvas {
  width: 100%;
  height: 100%;
}
.label text {
  font: 400 10px Roboto, "Noto Sans", sans-serif;
  paint-order: stroke;
  stroke: #fff;
  stroke-width: 2px;
  stroke-opacity: 0.8;
}
.label .bn {
  font-size: 8px;
}
.big text {
  font-size: 12px;
  stroke: none;
}
.big .bn {
  font-size: 12px;
}
.road-names {
  font: 400 8px Roboto, sans-serif;
  fill: #777;
}
.google {
  font: 500 15px Lato, Roboto, sans-serif;
  paint-order: stroke;
  stroke: #fff;
  stroke-width: 2px;
}
.drawer {
  position: absolute;
  left: 0;
  top: 5px;
  display: flex;
  align-items: center;
  justify-content: center;
  width: 15px;
  height: 34px;
  background: #fff;
  box-shadow: 0 0 3px #bbb;
}
.satellite {
  position: absolute;
  left: 15px;
  bottom: 14px;
  border: 1px solid #fff;
  border-radius: 3px;
  box-shadow: 0 0 2px #888;
  overflow: hidden;
}
.satellite span {
  position: absolute;
  left: 4px;
  bottom: 4px;
  color: #fff;
  font: 700 7px/10px Roboto, sans-serif;
}
.user {
  position: absolute;
  top: 11px;
  right: 20px;
  display: flex;
  align-items: center;
  gap: 14px;
}
.apps {
  background: none;
}
.signin {
  width: 48px;
  height: 20px;
  border-radius: 1px;
  background: #4c7bc4;
  color: #fff;
  font: 700 9px Roboto, sans-serif;
}
.controls {
  position: absolute;
  right: 14px;
  bottom: 13px;
  display: flex;
  flex-direction: column;
  gap: 2px;
}
.controls button {
  display: flex;
  align-items: center;
  justify-content: center;
  width: 19px;
  height: 20px;
  border-radius: 3px;
  background: #fff;
  box-shadow: 0 0 2px #bbb;
}
.zoom {
  border-radius: 3px;
  background: #fff;
  box-shadow: 0 0 2px #bbb;
}
.controls .zoom button {
  box-shadow: none;
}
.zoom button + button {
  border-top: 1px solid #e8e8e8;
}
.credits {
  position: absolute;
  right: 0;
  bottom: 0;
  display: flex;
  gap: 10px;
  padding: 0 14px 0 4px;
  background: rgba(250, 250, 250, 0.75);
  color: #444;
  font: 400 7px/9px Roboto, sans-serif;
}
.scale {
  display: flex;
  align-items: center;
  gap: 2px;
}
.scale i {
  width: 62px;
  height: 3px;
  border: 1px solid #666;
  border-top: 0;
}
.copy {
  display: flex;
  align-items: center;
  gap: 6px;
  font-size: 16px;
  font-weight: 500;
}
.c {
  width: 18px;
  border: 1px solid #dfeee4;
  border-radius: 50%;
  line-height: 18px;
  text-align: center;
  font-weight: 700;
}
</style>
